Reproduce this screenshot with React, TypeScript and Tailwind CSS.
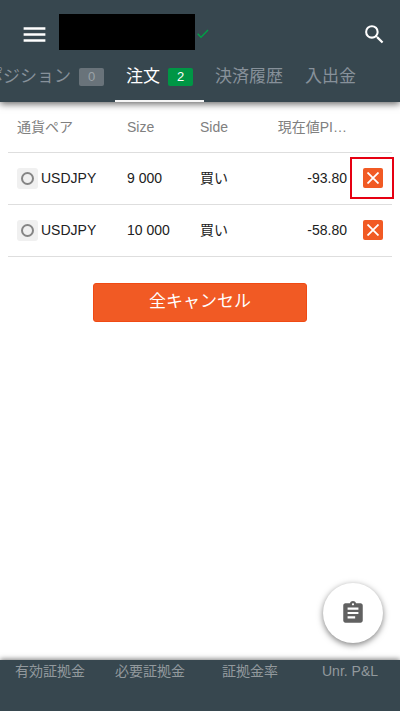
import { MdAssignment, MdMenu, MdSearch } from 'react-icons/md';

const tabs = [
  { label: 'ポジション', count: 0 },
  { label: '注文', count: 2, active: true },
  { label: '決済履歴' },
  { label: '入出金' },
];

const orders = [
  { pair: 'USDJPY', size: '9 000', side: '買い', pips: '-93.80', highlighted: true },
  { pair: 'USDJPY', size: '10 000', side: '買い', pips: '-58.80' },
];

const totals = ['有効証拠金', '必要証拠金', '証拠金率', 'Unr. P&L'];

function Header() {
  return (
    <header className="relative overflow-hidden bg-[#37474f]">
      <div className="flex h-[50px] items-end px-5">
        <button aria-label="Menu" className="flex h-8 w-7 items-center justify-center text-white">
          <MdMenu className="size-[29px] shrink-0" />
        </button>
        <div className="ml-[11px] h-9 w-[136px] bg-black" />
        <svg viewBox="0 0 12 10" className="mb-[11px] ml-0.5 h-2.5 w-3" fill="none" stroke="#00a046" strokeWidth="1.4">
          <path d="M0.7 4.8 4 8.2 11 1" />
        </svg>
        <button aria-label="Search" className="-mr-1.5 ml-auto flex h-8 w-6 items-center justify-center text-white">
          <MdSearch className="size-[25px] shrink-0" />
        </button>
      </div>
      {/* the tab strip is scrolled a little to the left */}
      <nav className="-ml-[25px] flex h-[52px]">
        {tabs.map((tab) => (
          <button
            key={tab.label}
            className={`flex shrink-0 items-center gap-2 border-b-2 px-[11px] pt-[3px] text-[17px] ${
              tab.active ? 'border-[#f5f5f5] text-white' : 'border-transparent text-[#87919a]'
            }`}
          >
            {tab.label}
            {tab.count !== undefined && (
              <span
                className={`flex h-[18px] w-[25px] items-center justify-center rounded-xs text-[13px] ${
                  tab.active ? 'bg-[#009645] text-white' : 'bg-[#69737a] text-[#9aa2a7]'
                }`}
              >
                {tab.count}
              </span>
            )}
          </button>
        ))}
      </nav>
    </header>
  );
}

function OrdersTable() {
  return (
    <table className="w-full table-fixed text-left text-sm text-[#212121]">
      <thead>
        <tr className="h-[50px] border-b border-[#dedede] text-[#808080]">
          <th className="w-[119px] pl-[9px] font-normal">通貨ペア</th>
          <th className="w-[73px] font-normal">Size</th>
          <th className="w-[60px] font-normal">Side</th>
          <th className="text-right font-normal">現在値PI…</th>
          <th className="w-[45px]" />
        </tr>
      </thead>
      <tbody>
        {orders.map((order) => (
          <tr key={order.size} className="h-[52px] border-b border-[#dedede]">
            <td className="pl-[9px]">
              <div className="flex items-center gap-[3px]">
                <button
                  aria-label="Details"
                  className="flex size-[21px] items-center justify-center rounded-[3px] bg-[#f0f0f0]"
                >
                  <span className="size-[13px] rounded-full border-2 border-[#858585]" />
                </button>
                {order.pair}
              </div>
            </td>
            <td>{order.size}</td>
            <td>{order.side}</td>
            <td className="text-right">{order.pips}</td>
            <td className="pr-[9px]">
              <div className="relative ml-auto size-5">
                <button
                  aria-label="Cancel order"
                  className="flex size-5 items-center justify-center rounded-xs bg-[#f15a24]"
                >
                  <svg viewBox="0 0 12 12" className="size-3" stroke="white" strokeWidth="1.8">
                    <path d="M0.5 0.5 11.5 11.5M11.5 0.5 0.5 11.5" />
                  </svg>
                </button>
                {order.highlighted && (
                  <div className="pointer-events-none absolute -inset-y-[11px] -right-[11px] -left-[13px] border-2 border-[#e60012]" />
                )}
              </div>
            </td>
          </tr>
        ))}
      </tbody>
    </table>
  );
}

export default function App() {
  return (
    <div className="flex min-h-screen flex-col bg-white font-['Liberation_Sans','Noto_Sans_CJK_JP',sans-serif]">
      <div className="shadow-[0_2px_7px_rgba(0,0,0,0.6)]">
        <Header />
      </div>
      <main className="flex grow flex-col px-2">
        <OrdersTable />
        <button className="mx-auto mt-[26px] h-[39px] w-[214px] rounded-[3px] border border-[#f04a14] bg-[#f15a24] text-[17px] text-white">
          全キャンセル
        </button>
        <button
          aria-label="New order"
          className="mt-auto mr-[9px] mb-[17px] ml-auto flex size-[60px] items-center justify-center rounded-full bg-white text-[#616161] shadow-[0_2px_6px_rgba(0,0,0,0.5)]"
        >
          <MdAssignment className="size-[26px]" />
        </button>
      </main>
      <footer className="grid h-[51px] grid-cols-4 bg-[#37474f] pt-px text-center text-sm text-[#92999d] shadow-[0_-1px_5px_rgba(0,0,0,0.5)]">
        {totals.map((label) => (
          <span key={label}>{label}</span>
        ))}
      </footer>
    </div>
  );
}
